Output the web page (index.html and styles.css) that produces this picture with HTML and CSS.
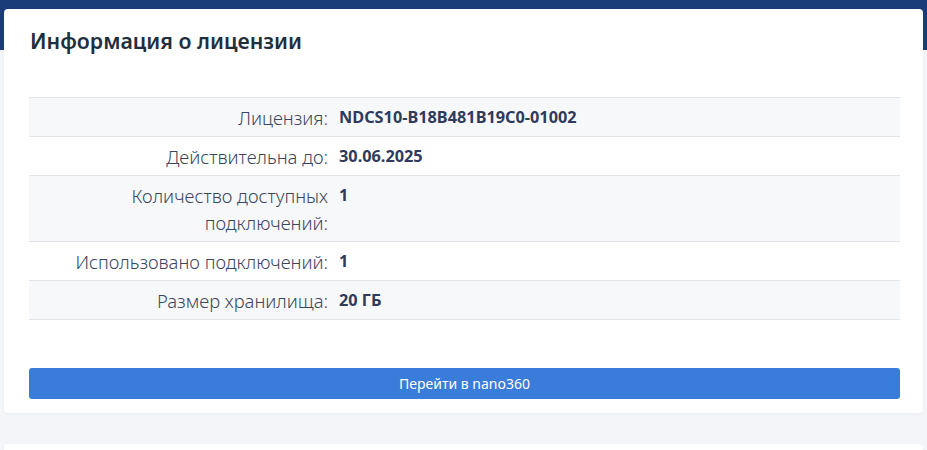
FILE: index.html
```html
<!DOCTYPE html>
<html>
<head>
  <meta charset="UTF-8">
  <meta name="viewport" content="width=device-width, initial-scale=1">
  <title>Информация о лицензии</title>
  <link rel="stylesheet" href="styles.css">
</head>
<body>
  <div class="page">
    <div class="card">
      <h2 class="card-title">Информация о лицензии</h2>
      <table class="info-table">
        <tr>
          <td class="label">Лицензия:</td>
          <td class="value">NDCS10-B18B481B19C0-01002</td>
        </tr>
        <tr>
          <td class="label">Действительна до:</td>
          <td class="value">30.06.2025</td>
        </tr>
        <tr>
          <td class="label">Количество доступных подключений:</td>
          <td class="value">1</td>
        </tr>
        <tr>
          <td class="label">Использовано подключений:</td>
          <td class="value">1</td>
        </tr>
        <tr>
          <td class="label">Размер хранилища:</td>
          <td class="value">20 ГБ</td>
        </tr>
      </table>
      <button class="go-button">Перейти в nano360</button>
    </div>
    <div class="card card-next"></div>
  </div>
</body>
</html>
```
FILE: styles.css
```css
body {
  margin: 0;
  padding: 0;
  background: linear-gradient(#1a3d7a 50px, #f3f5f9 50px);
  font-family: "Noto Sans", "Open Sans", sans-serif;
  color: #3b4660;
}

.page {
  padding: 9px 4px 0 4px;
}

.card {
  background-color: #fff;
  border-radius: 4px;
  padding: 0 23px 14px 25px;
  box-shadow: 0 1px 3px rgba(30, 50, 90, 0.05);
}

.card-title {
  margin: 0 0 42px 1px;
  padding-top: 18px;
  font-size: 21.3px;
  line-height: 28px;
  font-weight: 600;
  color: #1f2f3d;
}

.info-table {
  width: 100%;
  border-collapse: collapse;
  border-top: 1px solid #e1e4e9;
  font-size: 18.4px;
}

.info-table tr {
  border-bottom: 1px solid #e1e4e9;
}

.info-table tr:nth-child(odd) {
  background-color: #f7f8fa;
}

.info-table td {
  padding: 6px 0 5px 0;
  line-height: 27px;
  vertical-align: top;
}

.label {
  width: 299px;
  text-align: right;
  font-weight: 300;
}

.value {
  padding-left: 11px !important;
  font-size: 16.3px;
  font-weight: 700;
  color: #2f3a5c;
}

.go-button {
  display: block;
  width: 100%;
  margin-top: 48px;
  height: 31px;
  border: none;
  border-radius: 3px;
  background-color: #3a7cd9;
  color: #fff;
  font-family: "Noto Sans", "Open Sans", sans-serif;
  font-size: 14px;
  cursor: pointer;
}

.card-next {
  margin-top: 31px;
  height: 60px;
  padding: 0;
}
```
